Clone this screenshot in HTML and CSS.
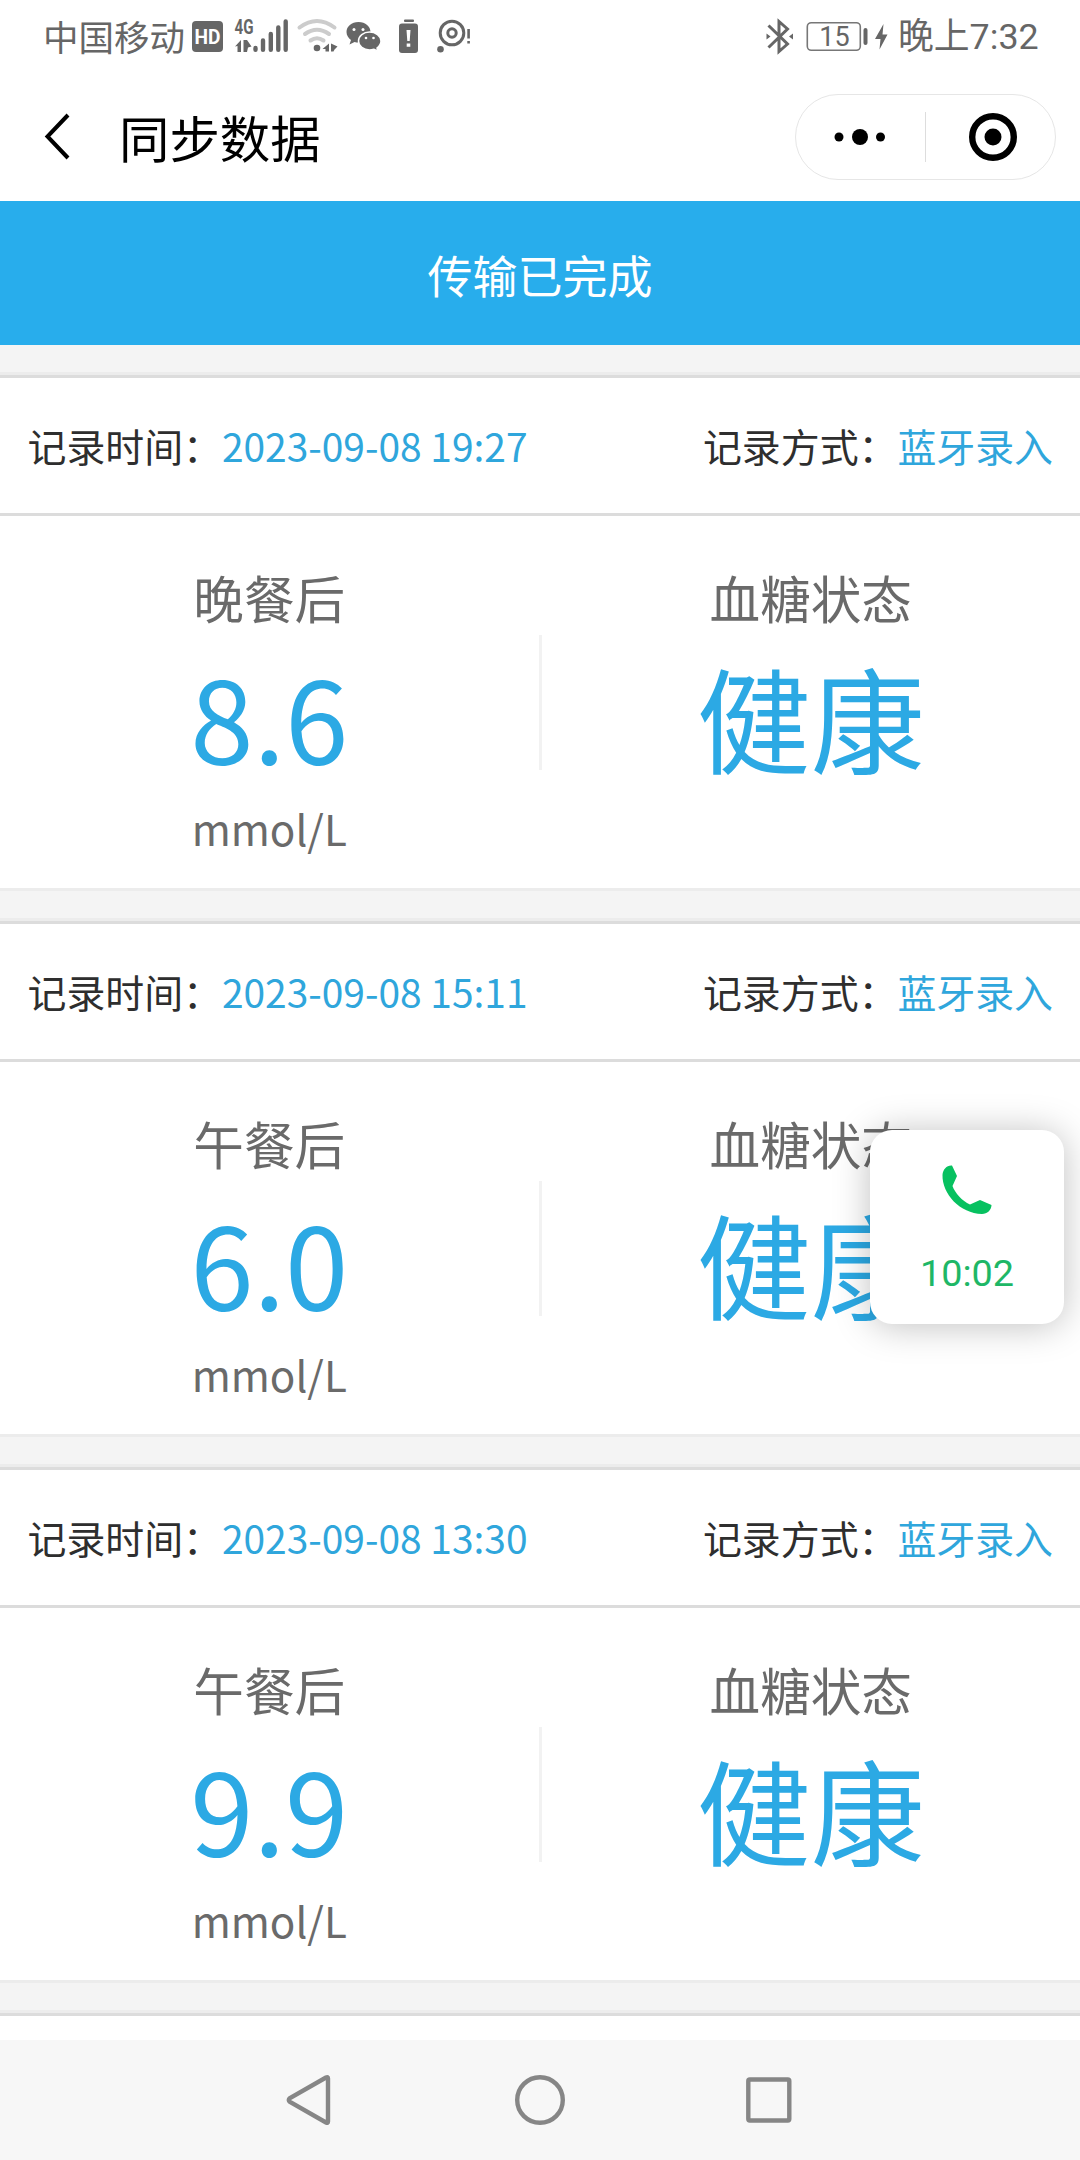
FILE: index.html
```
<!DOCTYPE html>
<html lang="zh-CN">
<head>
  <meta charset="UTF-8">
  <title>同步数据</title>
  <link rel="stylesheet" href="styles.css">
</head>
<body>
  <div class="status">
    <span class="carrier">中国移动</span>
    <svg class="status-left" viewBox="190 0 290 72" width="290" height="72">
      <!-- HD -->
      <rect x="192" y="21" width="31" height="31" rx="4"/>
      <text class="hd" x="207.500" y="43.500" text-anchor="middle" textLength="26" lengthAdjust="spacingAndGlyphs">HD</text>
      <!-- signal -->
      <text class="net" x="234.500" y="33.500" textLength="19" lengthAdjust="spacingAndGlyphs">4G</text>
      <path d="M235 46.500l6-6.500v12h-3.500v-6zM243.500 40h3.500l4.500 6.500-3.500 1-1 4.500h-3.500z"/>
      <path class="bars" d="M255.500 48v1.700M263 40.500v9.200M270.800 34v15.700M278.300 27.500v22.200M285.700 21.500v28.200"/>
      <!-- wifi -->
      <path class="wifi" d="M299.500 27.500q17.500-13 35 0M305 34q12-8.500 24 0M310.500 40.500q6.500-4.500 13 0"/>
      <circle cx="317" cy="48" r="3.300"/>
      <path d="M322.500 49l6.500-5.500v8h-3.500v-2.500zM331 43.500l6.500 3-3 3-1 2h-2.500z"/>
      <!-- wechat -->
      <path d="M358.500 22c-7 0-12 4.500-12 10 0 3.500 2 6 4.500 8l-1.500 4.500 5-2.500c8 2 16-2 16-10 0-5.500-5-10-12-10z"/>
      <path class="bubble" d="M369.500 32c-6 0-11 4-11 9s5 9 11 9c1.500 0 3-.3 4.500-.8l4 2-1-3.200c2.500-2 4-4 4-7 0-5-5.500-9-11.500-9z"/>
      <g fill="#fff"><circle cx="354" cy="29.500" r="1.500"/><circle cx="363" cy="29.500" r="1.500"/><circle cx="366" cy="38" r="1.300"/><circle cx="373.500" cy="38" r="1.300"/></g>
      <!-- low battery -->
      <rect x="404" y="19.500" width="10" height="2.500" rx="1"/>
      <rect x="399" y="23.500" width="19" height="29.500" rx="3"/>
      <path fill="#fff" d="M406.500 30h4l-.8 11h-2.400zM406.700 43.500h3.600v3.300h-3.600z"/>
      <!-- location -->
      <circle class="ring" cx="452" cy="33" r="11.800"/>
      <circle class="ring" cx="452" cy="33" r="4.200"/>
      <circle cx="440.500" cy="49.300" r="3.300"/>
      <path d="M467.300 29h2.600v9.500h-2.600zM467.300 41h2.600v2.600h-2.600z"/>
    </svg>
    <svg class="status-right" viewBox="765 0 125 72" width="125" height="72">
      <path class="bt" d="M768.500 25.500l19 18.500-8.500 7.500v-30l8.500 7.500-19 18.500"/>
      <path d="M766.500 33.500l4 3-4 3zM793 33.500l-4 3 4 3z"/>
      <rect class="cell" x="807.300" y="22.700" width="53" height="27.600" rx="4"/>
      <text class="pct" x="834.500" y="45.500" text-anchor="middle">15</text>
      <rect x="863.500" y="28" width="4" height="17" rx="2"/>
      <path d="M883.500 24l-8.500 15h5.500l-1 10.500 8-15h-5z"/>
    </svg>
    <span class="clock">晚上7:32</span>
  </div>

  <div class="nav">
    <svg class="back" viewBox="0 0 30 50" width="30" height="50">
      <path d="M25 3L4.500 24.500 25 46"/>
    </svg>
    <h1>同步数据</h1>
    <div class="capsule">
      <svg viewBox="0 0 129 84" width="129" height="84">
        <circle cx="43" cy="42" r="4.500"/>
        <circle cx="64" cy="42" r="8"/>
        <circle cx="84.500" cy="42" r="4.500"/>
      </svg>
      <i class="split"></i>
      <svg viewBox="0 0 129 84" width="129" height="84">
        <circle class="target" cx="67" cy="42" r="20.800"/>
        <circle cx="67" cy="42" r="8.500"/>
      </svg>
    </div>
  </div>

  <div class="banner">传输已完成</div>

  <div class="list">
    <div class="record">
      <div class="head">
        <div>记录时间：<span>2023-09-08 19:27</span></div>
        <div>记录方式：<span>蓝牙录入</span></div>
      </div>
      <div class="body">
        <div class="col">
          <div class="label">晚餐后</div>
          <div class="value">8.6</div>
          <div class="unit">mmol/L</div>
        </div>
        <i class="line"></i>
        <div class="col">
          <div class="label">血糖状态</div>
          <div class="value">健康</div>
        </div>
      </div>
    </div>

    <div class="record">
      <div class="head">
        <div>记录时间：<span>2023-09-08 15:11</span></div>
        <div>记录方式：<span>蓝牙录入</span></div>
      </div>
      <div class="body">
        <div class="col">
          <div class="label">午餐后</div>
          <div class="value">6.0</div>
          <div class="unit">mmol/L</div>
        </div>
        <i class="line"></i>
        <div class="col">
          <div class="label">血糖状态</div>
          <div class="value">健康</div>
        </div>
      </div>
    </div>

    <div class="record">
      <div class="head">
        <div>记录时间：<span>2023-09-08 13:30</span></div>
        <div>记录方式：<span>蓝牙录入</span></div>
      </div>
      <div class="body">
        <div class="col">
          <div class="label">午餐后</div>
          <div class="value">9.9</div>
          <div class="unit">mmol/L</div>
        </div>
        <i class="line"></i>
        <div class="col">
          <div class="label">血糖状态</div>
          <div class="value">健康</div>
        </div>
      </div>
    </div>

    <div class="record"></div>
  </div>

  <div class="keys">
    <svg viewBox="0 0 60 60" width="60" height="60"><path d="M45 7.500Q47 6.500 47 8.500V51.500Q47 53.500 45 52.500L9 32Q6.500 30 9 28z"/></svg>
    <svg viewBox="0 0 60 60" width="60" height="60"><circle cx="30" cy="30" r="22.800"/></svg>
    <svg viewBox="0 0 60 60" width="60" height="60"><rect x="9.300" y="9.500" width="41" height="41" rx="1.500"/></svg>
  </div>

  <!-- floating call window -->
  <div class="call">
    <svg viewBox="0 0 50 50" width="50" height="50">
      <path d="M0.500 10C1 4 5 0 10 0.500L15 11 10.500 21C13 28 20 36 28 39.500L38 35 49.500 40C49.500 45 45 49 40 49C18 48.500 0 29 0.500 10z"/>
    </svg>
    <span>10:02</span>
  </div>
</body>
</html>
```
FILE: styles.css
```
* { box-sizing: border-box; }
body { margin: 0; width: 1080px; height: 2160px; overflow: hidden; display: flex; flex-direction: column; position: relative; font-family: "Noto Sans CJK SC", sans-serif; background: #fff; }
svg { display: block; flex: none; }

.status { display: flex; align-items: center; height: 72px; padding: 0 42px 0 43px; color: #666; font-size: 35.5px; line-height: 72px; white-space: nowrap; }
.status svg { fill: #666; }
.carrier { width: 147px; }
.status-right { margin-left: auto; }
.clock { width: 148px; padding: 2px 0 0 8px; font-family: Roboto, "Noto Sans CJK SC", sans-serif; font-size: 35.8px; }
.hd { fill: #fff; font: bold 20px Roboto, sans-serif; }
.net { font: bold 20px Roboto, sans-serif; }
.bars { fill: none; stroke: #666; stroke-width: 4.4; stroke-linecap: round; }
.wifi { fill: none; stroke: #ccc; stroke-width: 4; stroke-linecap: round; }
.bubble { stroke: #fff; stroke-width: 1.5; }
.ring { fill: none; stroke: #666; stroke-width: 3; }
.bt { fill: none; stroke: #666; stroke-width: 3; }
.cell { fill: none; stroke: #777; stroke-width: 1.6; }
.pct { font: 27px Roboto, sans-serif; }

.nav { display: flex; align-items: center; height: 129px; padding: 0 24px 0 43px; }
.back path { fill: none; stroke: #000; stroke-width: 4; }
.nav h1 { margin: 0 0 0 46px; font-size: 50.4px; line-height: 72px; font-weight: 400; color: #000; }
.capsule { display: flex; align-items: center; width: 261px; height: 86px; margin-left: auto; border: 1.5px solid #e6e6e6; border-radius: 43px; }
.split { width: 1px; height: 50px; background: #ddd; }
.target { fill: none; stroke: #000; stroke-width: 6.4; }

.banner { height: 144px; line-height: 148px; background: #28adec; color: #fff; font-size: 45px; text-align: center; }

.list { flex: 1; overflow: hidden; padding-top: 30px; background: #f4f4f4; }
.record { height: 516px; margin-bottom: 30px; background: #fff; border-top: 3px solid #dcdcdc; border-bottom: 3px solid #ececec; box-shadow: 0 -3px #ececec; }
.head { display: flex; justify-content: space-between; height: 138px; padding: 0 27px 0 27.5px; border-bottom: 3px solid #dcdcdc; font-size: 38.9px; line-height: 134px; color: #2e2e2e; }
.head span { color: #2fa6dc; }
.body { display: flex; height: 372px; text-align: center; }
.col { flex: 1; padding-top: 45px; }
.line { width: 3px; height: 135px; margin-top: 119px; background: #f2f2f2; }
.label { font-size: 50.6px; line-height: 72px; color: #6a6a6a; }
.value { font-size: 114px; line-height: 166px; color: #2ca9e4; }
.unit { font-size: 42.2px; line-height: 58px; color: #6a6a6a; }

.keys { display: flex; justify-content: center; align-items: center; gap: 169px; height: 120px; background: #f7f7f7; }
.keys svg { fill: none; stroke: #868686; stroke-width: 4.4; }

.call { position: absolute; left: 870px; top: 1130px; width: 194px; height: 194px; display: flex; flex-direction: column; align-items: center; padding-top: 35px; border-radius: 22px; background: #fff; box-shadow: 0 2px 36px rgba(0, 0, 0, .25); }
.call svg { fill: #07c160; }
.call span { margin-top: 35px; font: 37.8px/46px Roboto, sans-serif; color: #1eb766; }
```
